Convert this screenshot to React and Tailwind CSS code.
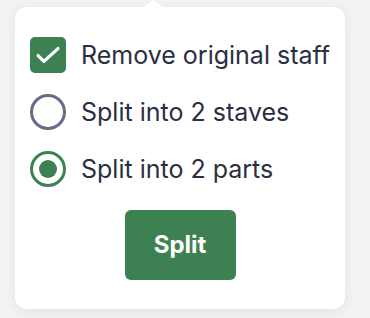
import { useState } from 'react';

const options = [
    { id: 'staves', label: 'Split into 2 staves' },
    { id: 'parts', label: 'Split into 2 parts' },
];

const App = () => {
    const [removeOriginal, setRemoveOriginal] = useState(true);
    const [mode, setMode] = useState('parts');

    return (
        <div className="w-[370px] h-[318px] bg-[#f3f3f5] pt-[7px] pl-[15px] font-['Inter',sans-serif]">
            {/* Popover card */}
            <div className="relative w-[330px] h-[302px] bg-white rounded-[12px] shadow-[0_2px_12px_rgba(0,0,0,0.08)] pt-[30px] px-[15px] flex flex-col">
                {/* Arrow */}
                <div className="absolute -top-[7px] left-[127px] w-0 h-0 border-l-[11px] border-r-[11px] border-b-[8px] border-l-transparent border-r-transparent border-b-white" />

                {/* Checkbox row */}
                <button
                    onClick={() => setRemoveOriginal(!removeOriginal)}
                    className="flex items-center gap-[15px] h-[36px] text-left whitespace-nowrap"
                >
                    <span
                        className={`w-[36px] h-[36px] shrink-0 rounded-[5px] flex items-center justify-center ${removeOriginal ? 'bg-[#3d8152]' : 'border-[3px] border-[#646c87]'}`}
                    >
                        {removeOriginal && (
                            <svg width="28" height="28" viewBox="0 0 24 24" fill="none" stroke="white" strokeWidth="2.8" strokeLinecap="round" strokeLinejoin="round">
                                <path d="M3.5 12.5l5 5L20.5 6.5" />
                            </svg>
                        )}
                    </span>
                    <span className="text-[25px] leading-none text-[#2b2f42]">Remove original staff</span>
                </button>

                {/* Radio rows */}
                {options.map((option) => {
                    const isSelected = mode === option.id;
                    return (
                        <button
                            key={option.id}
                            onClick={() => setMode(option.id)}
                            className="flex items-center gap-[15px] h-[36px] mt-[21px] text-left whitespace-nowrap"
                        >
                            <span
                                className={`w-[36px] h-[36px] shrink-0 rounded-full border-[3px] flex items-center justify-center ${isSelected ? 'border-[#3d8152]' : 'border-[#646c87]'}`}
                            >
                                {isSelected && <span className="w-[18px] h-[18px] rounded-full bg-[#3d8152]" />}
                            </span>
                            <span className="text-[25px] leading-none text-[#2b2f42]">{option.label}</span>
                        </button>
                    );
                })}

                {/* Split button */}
                <div className="flex justify-center mt-[23px]">
                    <button className="w-[111px] h-[70px] rounded-[6px] bg-[#3d8152] text-white text-[24px] font-bold">
                        Split
                    </button>
                </div>
            </div>
        </div>
    );
};

export default App;
